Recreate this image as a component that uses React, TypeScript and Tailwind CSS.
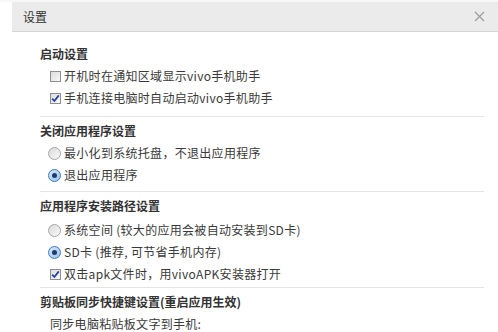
import React from "react";

const font = { fontFamily: '"Noto Sans CJK SC", "Noto Sans", sans-serif' };

function Checkbox({ checked }: { checked?: boolean }) {
  return (
    <span className="flex h-[11px] w-[11px] flex-shrink-0 items-center justify-center border border-[#8e8f8f] bg-gradient-to-br from-[#dcdcdc] to-[#f8f8f8]">
      {checked && (
        <svg width="9" height="9" viewBox="0 0 9 9">
          <path d="M1.2 4.6 L3.4 7 L7.8 1.4" fill="none" stroke="#21409a" strokeWidth="1.7" />
        </svg>
      )}
    </span>
  );
}

function Radio({ checked }: { checked?: boolean }) {
  return (
    <span
      className={`flex h-[13px] w-[13px] flex-shrink-0 items-center justify-center rounded-full border ${
        checked ? "border-[#3d7bc6] bg-gradient-to-br from-[#d5e7f8] to-[#9cc4ec]" : "border-[#a6a6a6] bg-gradient-to-br from-[#d8d8d8] to-[#fbfbfb]"
      }`}
    >
      {checked && <span className="h-[5px] w-[5px] rounded-full bg-[#1c3c6e]" />}
    </span>
  );
}

function Row({ kind, checked, children }: { kind: "check" | "radio"; checked?: boolean; children: React.ReactNode }) {
  return (
    <div className={`flex h-[22px] items-center text-[#3a3a3a] ${kind === "check" ? "gap-[3px] pl-[10px]" : "gap-[3px] pl-[8px]"}`}>
      {kind === "check" ? <Checkbox checked={checked} /> : <Radio checked={checked} />}
      <span className="tracking-[0.3px]">{children}</span>
    </div>
  );
}

function Heading({ children }: { children: React.ReactNode }) {
  return <div className="flex h-[22px] items-center font-bold text-[#333]">{children}</div>;
}

export default function App() {
  return (
    <div className="h-[332px] w-[498px] overflow-hidden bg-white text-[12px] text-[#333]" style={font}>
      <div className="h-[2px] bg-[#f7f7f7]" />
      <div className="ml-[12px] flex h-[30px] items-center justify-between border-b border-[#d6d6d6] bg-[#ebebeb] pl-[11px] pr-[13px]">
        <span className="text-[12px] text-[#333]">设置</span>
        <svg width="11" height="11" viewBox="0 0 11 11">
          <path d="M1 1 L10 10 M10 1 L1 10" stroke="#9a9a9a" strokeWidth="1.1" />
        </svg>
      </div>

      <div className="ml-[40px] mr-[14px] mt-[11px]">
        <Heading>启动设置</Heading>
        <Row kind="check">开机时在通知区域显示vivo手机助手</Row>
        <Row kind="check" checked>手机连接电脑时自动启动vivo手机助手</Row>
        <div className="mt-[7px] border-t border-[#e4e4e4]" />

        <div className="mt-[3px]">
          <Heading>关闭应用程序设置</Heading>
          <Row kind="radio">最小化到系统托盘，不退出应用程序</Row>
          <Row kind="radio" checked>退出应用程序</Row>
        </div>
        <div className="mt-[5px] border-t border-[#e4e4e4]" />

        <div className="mt-[3px]">
          <Heading>应用程序安装路径设置</Heading>
          <div className="mt-[2px]">
            <Row kind="radio">系统空间 (较大的应用会被自动安装到SD卡)</Row>
            <Row kind="radio" checked>SD卡 (推荐, 可节省手机内存)</Row>
            <Row kind="check" checked>双击apk文件时，用vivoAPK安装器打开</Row>
          </div>
        </div>
        <div className="mt-[2px] border-t border-[#e4e4e4]" />

        <div className="mt-[3px]">
          <Heading>剪贴板同步快捷键设置(重启应用生效)</Heading>
          <div className="flex h-[22px] items-center pl-[10px] tracking-[0.3px] text-[#3a3a3a]">同步电脑粘贴板文字到手机:</div>
        </div>
      </div>
    </div>
  );
}
